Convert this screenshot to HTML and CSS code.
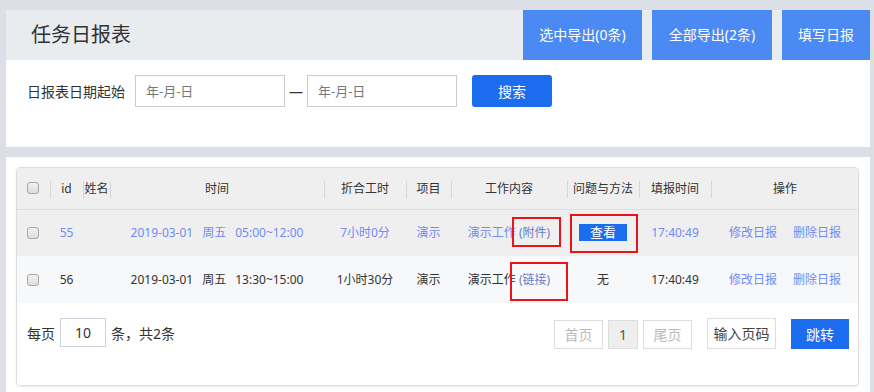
FILE: index.html
```html
<!DOCTYPE html>
<html lang="zh-CN">
<head>
  <meta charset="UTF-8">
  <meta name="viewport" content="width=device-width, initial-scale=1.0">
  <title>任务日报表</title>
  <link rel="stylesheet" href="styles.css">
</head>
<body>
  <div class="page">
    <section class="panel">
      <div class="panel-head">
        <h1>任务日报表</h1>
        <div class="head-actions">
          <a class="head-btn btn-sel" href="#">选中导出(0条)</a>
          <a class="head-btn btn-all" href="#">全部导出(2条)</a>
          <a class="head-btn btn-add" href="#">填写日报</a>
        </div>
      </div>
      <form class="search-row" onsubmit="return false">
        <label>日报表日期起始</label>
        <input type="text" class="date-input" placeholder="年-月-日">
        <span class="dash">—</span>
        <input type="text" class="date-input" placeholder="年-月-日">
        <button class="search-btn">搜索</button>
      </form>
    </section>

    <section class="panel list-panel">
      <div class="table-card">
        <table class="report-table">
          <colgroup>
            <col class="c-check"><col class="c-id"><col class="c-name"><col class="c-time">
            <col class="c-hours"><col class="c-proj"><col class="c-work"><col class="c-prob">
            <col class="c-fill"><col class="c-ops">
          </colgroup>
          <thead>
            <tr>
              <th><input type="checkbox" class="cb"></th>
              <th>id</th>
              <th>姓名</th>
              <th>时间</th>
              <th>折合工时</th>
              <th>项目</th>
              <th>工作内容</th>
              <th>问题与方法</th>
              <th>填报时间</th>
              <th>操作</th>
            </tr>
          </thead>
          <tbody>
            <tr class="row-active">
              <td><input type="checkbox" class="cb"></td>
              <td>55</td>
              <td></td>
              <td><span>2019-03-01</span><span class="gap">周五</span><span>05:00~12:00</span></td>
              <td>7小时0分</td>
              <td>演示</td>
              <td>演示工作 <span class="attach mark mark-file">(附件)</span></td>
              <td><span class="mark mark-view"><a class="view-btn" href="#">查看</a></span></td>
              <td>17:40:49</td>
              <td class="ops"><a href="#">修改日报</a><a href="#">删除日报</a></td>
            </tr>
            <tr class="row-plain">
              <td><input type="checkbox" class="cb"></td>
              <td>56</td>
              <td></td>
              <td><span>2019-03-01</span><span class="gap">周五</span><span>13:30~15:00</span></td>
              <td>1小时30分</td>
              <td>演示</td>
              <td>演示工作 <span class="attach mark mark-link">(链接)</span></td>
              <td>无</td>
              <td>17:40:49</td>
              <td class="ops"><a href="#">修改日报</a><a href="#">删除日报</a></td>
            </tr>
          </tbody>
        </table>

        <div class="pager">
          <div class="page-size">
            每页 <input type="text" class="size-input" value="10"> 条，共2条
          </div>
          <div class="pager-right">
            <span class="pg pg-off">首页</span>
            <span class="pg pg-cur">1</span>
            <span class="pg pg-off">尾页</span>
            <input type="text" class="jump-input" placeholder="输入页码">
            <button class="jump-btn">跳转</button>
          </div>
        </div>
      </div>
    </section>
  </div>
</body>
</html>
```

FILE: styles.css
```css
:root {
  --bg: #dcdfe6;
  --head-bg: #e9ecef;
  --btn: #4b89f3;
  --blue: #1c6cf0;
  --link: #6f8cf2;
  --line: #dddddd;
  --text: #333;
}

* {
  box-sizing: border-box;
}

body {
  margin: 0;
  background: var(--bg);
  color: var(--text);
  font-family: "Noto Sans", "Noto Sans CJK SC", sans-serif;
  font-size: 14px;
}

.page {
  padding: 10px 4px 0 6px;
}

.panel {
  background: #fff;
  margin-bottom: 10px;
}

.panel-head {
  display: flex;
  justify-content: space-between;
  height: 50px;
  background: var(--head-bg);
}

.panel-head h1 {
  margin: 0;
  padding-left: 25px;
  font-size: 20px;
  font-weight: 400;
  line-height: 50px;
  color: #333;
}

.head-actions {
  display: flex;
  gap: 10px;
}

.head-btn {
  display: block;
  background: var(--btn);
  color: #fff;
  text-decoration: none;
  line-height: 50px;
  text-align: center;
}

.btn-sel { width: 119px; }
.btn-all { width: 120px; }
.btn-add { width: 88px; }

.search-row {
  display: flex;
  align-items: center;
  height: 87px;
  padding: 15px 0 40px 21px;
}

.search-row label {
  margin-right: 10px;
}

.date-input {
  width: 150px;
  height: 32px;
  border: 1px solid #ccc;
  padding: 0 10px;
  font: inherit;
  font-size: 13px;
  outline: none;
}

.date-input::placeholder {
  color: #777;
}

.dash {
  margin: 0 4px;
  color: #333;
}

.search-btn {
  width: 80px;
  height: 32px;
  margin-left: 15px;
  border: none;
  border-radius: 3px;
  background: var(--blue);
  color: #fff;
  font: inherit;
  cursor: pointer;
}

.list-panel {
  padding: 10px 11px 6px 10px;
  min-height: 235px;
  margin-bottom: 0;
}

.table-card {
  border: 1px solid var(--line);
  border-radius: 4px;
  overflow: hidden;
  box-shadow: 0 1px 2px rgba(0,0,0,0.08);
}

.report-table {
  width: 100%;
  table-layout: fixed;
  border-collapse: collapse;
  font-size: 12px;
}

.c-check { width: 33px; }
.c-id { width: 33px; }
.c-name { width: 27px; }
.c-time { width: 214px; }
.c-hours { width: 82px; }
.c-proj { width: 45px; }
.c-work { width: 116px; }
.c-prob { width: 72px; }
.c-fill { width: 72px; }
.c-ops { width: 148px; }

.report-table th {
  position: relative;
  height: 41px;
  background: #efefef;
  border-bottom: 1px solid var(--line);
  font-weight: 400;
  text-align: center;
  padding: 0;
  white-space: nowrap;
}

.report-table th + th::before {
  content: "";
  position: absolute;
  left: 0;
  top: 13px;
  bottom: 11px;
  border-left: 1px solid #d6d6d6;
}

.report-table td {
  height: 47px;
  padding: 0;
  text-align: center;
  white-space: nowrap;
  line-height: 17px;
}

.row-active td {
  background: #efefef;
  color: var(--link);
}

.row-plain td {
  background: #f7f8fa;
  color: #333;
}

.gap {
  margin: 0 9px;
}

.cb {
  appearance: none;
  -webkit-appearance: none;
  display: block;
  width: 12px;
  height: 12px;
  margin: 0 0 0 10px;
  border: 1px solid #a8a8a8;
  border-radius: 3px;
  background: linear-gradient(#f0f0f0, #dedede);
}

.attach {
  color: #6a7cc6;
}

.mark {
  position: relative;
  display: inline-block;
}

.mark::after {
  content: "";
  position: absolute;
  border: 2px solid #e8141a;
}

.mark-file::after {
  left: -7px;
  right: -11px;
  top: -7px;
  bottom: -6px;
}

.mark-link::after {
  left: -9px;
  right: -18px;
  top: -9px;
  bottom: -13px;
}

.mark-view::after {
  left: -9px;
  right: -11px;
  top: -10px;
  bottom: -12px;
}

.view-btn {
  display: block;
  width: 48px;
  height: 17px;
  line-height: 17px;
  background: var(--blue);
  color: #fff;
  text-decoration: none;
  font-size: 13px;
}

.ops a {
  color: var(--link);
  text-decoration: none;
  margin: 0 8px;
}

.pager {
  display: flex;
  justify-content: space-between;
  align-items: flex-start;
  height: 82px;
  padding: 15px 9px 0 10px;
  background: #fff;
}

.page-size {
  display: flex;
  align-items: center;
  gap: 5px;
  height: 29px;
}

.size-input {
  width: 46px;
  height: 29px;
  border: 1px solid #ccd3dc;
  text-align: center;
  font: inherit;
  color: #333;
  outline: none;
}

.pager-right {
  display: flex;
  align-items: center;
  gap: 5px;
  padding-top: 1px;
}

.pg {
  display: block;
  height: 29px;
  line-height: 27px;
  border: 1px solid var(--line);
  text-align: center;
  width: 49px;
}

.pg-off {
  color: #bbb;
}

.pg-cur {
  width: 30px;
  background: #eee;
  color: #555;
}

.jump-input {
  width: 69px;
  height: 31px;
  margin: -1px 0 0 10px;
  border: 1px solid #ddd;
  padding: 0;
  text-align: center;
  font: inherit;
  outline: none;
}

.jump-input::placeholder {
  color: #444;
}

.jump-btn {
  width: 58px;
  height: 30px;
  margin-left: 10px;
  border: none;
  background: var(--blue);
  color: #fff;
  font: inherit;
}
```
